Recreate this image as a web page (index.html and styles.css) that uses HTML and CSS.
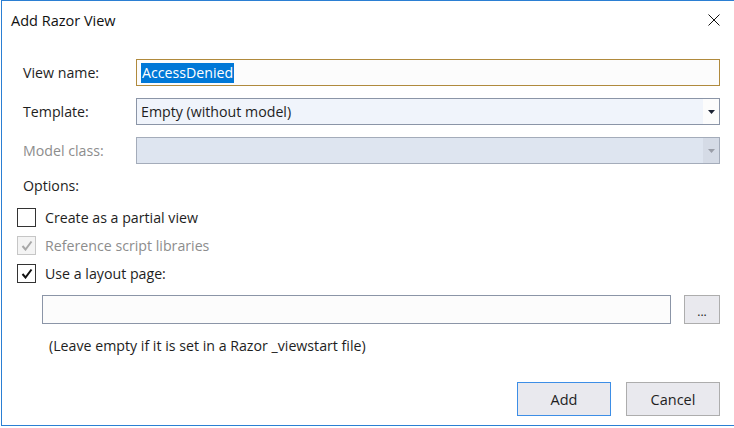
FILE: index.html
```html
<!DOCTYPE html>
<html>
<head>
<meta charset="utf-8">
<link rel="stylesheet" href="styles.css">
</head>
<body>
<div class="dialog">
  <div class="titlebar">
    <span class="title">Add Razor View</span>
    <span class="close"><svg width="12" height="12" viewBox="0 0 12 12"><path d="M0.5 0.5 L11.5 11.5 M11.5 0.5 L0.5 11.5" stroke="#111" stroke-width="1" fill="none"/></svg></span>
  </div>
  <div class="form">
    <label class="lbl">View name:</label>
    <div class="field focused"><span class="sel">AccessDenied</span></div>
    <label class="lbl">Template:</label>
    <div class="field combo"><span class="val">Empty (without model)</span><span class="arrow"><svg width="7" height="4" viewBox="0 0 7 4"><path d="M0 0 H7 L3.5 4 Z" fill="#1b2233"/></svg></span></div>
    <label class="lbl disabled">Model class:</label>
    <div class="field combo dis"><span class="val"></span><span class="arrow"><svg width="7" height="4" viewBox="0 0 7 4"><path d="M0 0 H7 L3.5 4 Z" fill="#9a9ea8"/></svg></span></div>
  </div>
  <div class="options">Options:</div>
  <div class="checks">
    <div class="check"><span class="box"></span><span>Create as a partial view</span></div>
    <div class="check disabled"><span class="box"><svg width="12" height="11" viewBox="0 0 12 11"><path d="M1.5 6 L4.5 9.5 L10.5 1.5" stroke="#a8a8a8" stroke-width="2" fill="none"/></svg></span><span>Reference script libraries</span></div>
    <div class="check"><span class="box"><svg width="12" height="11" viewBox="0 0 12 11"><path d="M1.5 6 L4.5 9.5 L10.5 1.5" stroke="#111" stroke-width="2" fill="none"/></svg></span><span>Use a layout page:</span></div>
  </div>
  <div class="layoutrow">
    <div class="field layout"></div>
    <button class="btn browse">...</button>
  </div>
  <div class="help">(Leave empty if it is set in a Razor _viewstart file)</div>
  <div class="actions">
    <button class="btn primary">Add</button>
    <button class="btn">Cancel</button>
  </div>
</div>
</body>
</html>
```
FILE: styles.css
```css
html, body {
  margin: 0;
  padding: 0;
  background: #ffffff;
}
body {
  font-family: "Open Sans", "Noto Sans", sans-serif;
  font-size: 14.2px;
  color: #1e1e1e;
  overflow: hidden;
}
.dialog {
  margin-left: 1px;
  width: 733px;
  height: 424px;
  border: 1px solid #2b7fd3;
  border-right: 0;
  display: flex;
  flex-direction: column;
  background: #fff;
}
.titlebar {
  height: 38px;
  display: flex;
  align-items: center;
  justify-content: space-between;
  padding: 0 15px 0 9px;
}
.title {
  font-size: 14.5px;
  color: #111;
}
.close {
  display: flex;
  width: 12px;
  height: 12px;
}
.form {
  margin-top: 20px;
  margin-left: 21px;
  display: grid;
  grid-template-columns: 113px 584px;
  grid-auto-rows: 27px;
  row-gap: 12px;
  align-items: center;
}
.lbl {
  line-height: 27px;
}
.lbl.disabled, .check.disabled {
  color: #8d8d8d;
}
.field {
  box-sizing: border-box;
  height: 27px;
  border: 1px solid #8b95a7;
  background: #fcfcfc;
  display: flex;
  align-items: center;
}
.field.focused {
  border-color: #b08a3d;
  padding-left: 4px;
}
.sel {
  background: #0078d7;
  color: #fff;
  line-height: 20px;
  padding: 0 1px;
}
.combo {
  background: #f0f4fb;
  justify-content: space-between;
  padding-left: 4px;
}
.combo .arrow {
  width: 16px;
  height: 25px;
  background: #fcfcfc;
  display: flex;
  align-items: center;
  justify-content: center;
}
.combo.dis {
  background: #dee5f0;
  border-color: #a4acba;
}
.combo.dis .arrow {
  background: #d5dbe6;
}
.options {
  margin: 12px 0 0 21px;
  height: 20px;
  line-height: 20px;
}
.checks {
  margin: 11px 0 0 15px;
  display: flex;
  flex-direction: column;
  gap: 8px;
}
.check {
  display: flex;
  align-items: center;
  gap: 9px;
  height: 20px;
}
.box {
  box-sizing: border-box;
  width: 19px;
  height: 19px;
  border: 1px solid #333;
  background: #fff;
  display: flex;
  align-items: center;
  justify-content: center;
}
.check.disabled .box {
  border-color: #c6c6c6;
  background: #f4f4f4;
}
.layoutrow {
  margin: 12px 0 0 40px;
  display: flex;
  gap: 13px;
}
.field.layout {
  width: 629px;
  height: 29px;
}
.btn {
  box-sizing: border-box;
  font-family: inherit;
  font-size: 14.5px;
  color: #1e1e1e;
  background: #e9e9ee;
  border: 1px solid #adadad;
  width: 94px;
  height: 34px;
  padding: 0;
  margin: 0;
}
.btn.browse {
  width: 36px;
  height: 29px;
  font-size: 12px;
  line-height: 12px;
  padding-top: 4px;
}
.btn.primary {
  border-color: #3d8ee6;
}
.help {
  margin: 12px 0 0 47px;
  height: 20px;
  line-height: 20px;
}
.actions {
  margin-top: 26px;
  display: flex;
  justify-content: flex-end;
  gap: 15px;
  padding-right: 15px;
}
```
